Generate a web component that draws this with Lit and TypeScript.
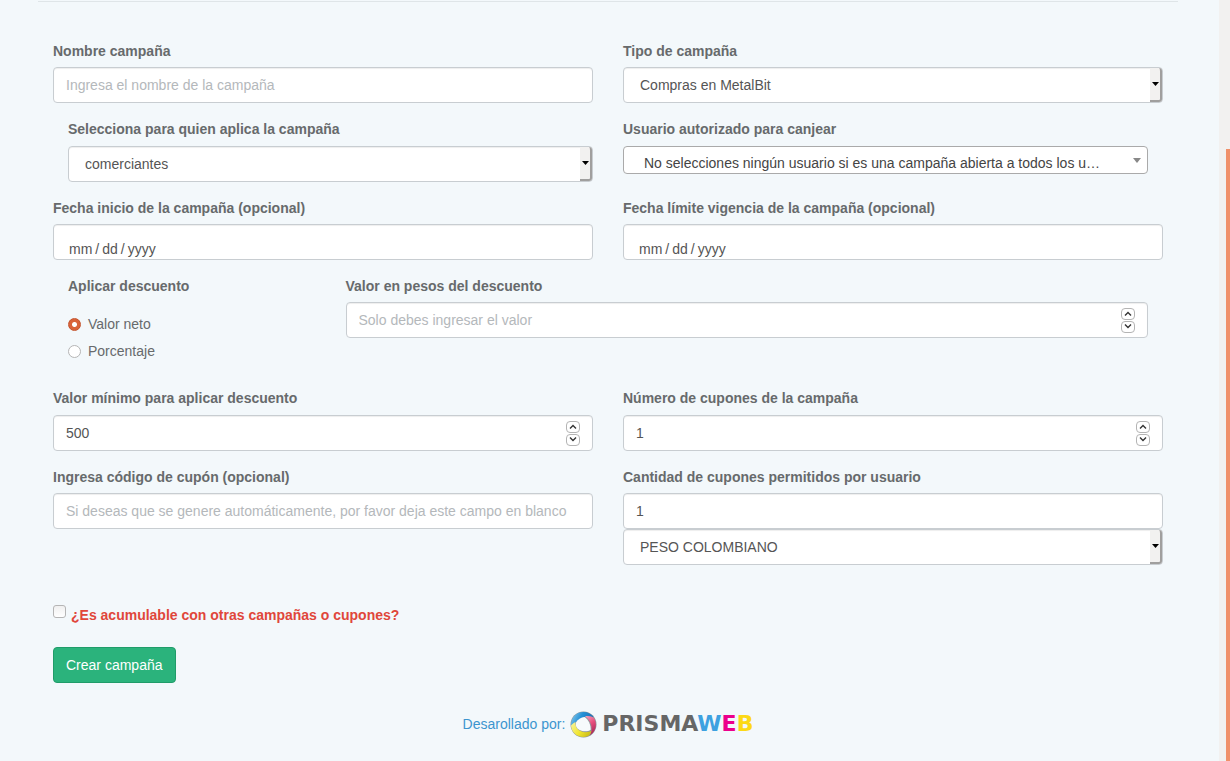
import { LitElement, html, css, svg } from "lit";
import { customElement, property } from "lit/decorators.js";

const baseStyles = css`
  *,
  *::before,
  *::after {
    box-sizing: border-box;
  }
  label,
  legend {
    display: block;
    padding: 0;
    font-weight: 700;
    line-height: 20px;
    color: #676a6c;
  }
  input,
  select,
  button {
    font: inherit;
    margin: 0;
  }
  .field {
    display: flex;
    flex-direction: column;
    gap: var(--label-gap, 6px);
    min-width: 0;
  }
  .control {
    width: 100%;
    height: 36px;
    padding: 0 12px;
    border: 1px solid #c8cdd1;
    border-radius: 4px;
    background: #fff;
    box-shadow: inset 0 1px 1px rgba(0, 0, 0, 0.07);
    color: #555;
    outline: none;
  }
  .control::placeholder,
  .bare::placeholder {
    color: #b4b8bb;
    opacity: 1;
  }
`;

@customElement("select-field")
class SelectField extends LitElement {
  @property() label = "";
  @property() value = "";
  @property() look = "native";

  static styles = [
    baseStyles,
    css`
      :host {
        display: block;
        min-width: 0;
      }
      .stack {
        display: grid;
        align-items: center;
      }
      .stack > * {
        grid-area: 1 / 1;
        min-width: 0;
      }
      select {
        appearance: none;
        text-overflow: ellipsis;
      }
      .native {
        padding: 0 28px 0 16px;
      }
      .search {
        height: 28px;
        padding: 6px 44px 0 20px;
        border-color: #aaa;
        box-shadow: none;
        color: #444;
      }
      .arrow {
        justify-self: end;
        align-self: stretch;
        display: grid;
        place-items: center;
        width: 12px;
        margin: 1px 1px 1px 0;
        border-right: 2px solid #a09f9e;
        border-bottom: 2px solid #a09f9e;
        border-radius: 0 3px 3px 0;
        background: #f2f1f0;
        pointer-events: none;
      }
      .caret {
        justify-self: end;
        margin-right: 7px;
        pointer-events: none;
      }
    `,
  ];

  render() {
    const native = this.look === "native";
    return html`
      <div class="field">
        ${this.label ? html`<label for="s">${this.label}</label>` : ""}
        <div class="stack">
          <select
            id="s"
            class="control ${this.look}"
            aria-label=${this.label || "Moneda"}
          >
            <option>${this.value}</option>
          </select>
          ${native
            ? html`<span class="arrow"
                ><svg width="7" height="4" viewBox="0 0 7 4">
                  <path d="M0 0H7L3.5 4Z" fill="#000" /></svg
              ></span>`
            : html`<svg
                class="caret"
                width="8"
                height="5"
                viewBox="0 0 8 5"
              >
                <path d="M0 0H8L4 5Z" fill="#888" />
              </svg>`}
        </div>
      </div>
    `;
  }
}

@customElement("number-field")
class NumberField extends LitElement {
  @property() label = "";
  @property() value = "";
  @property() placeholder = "";

  static styles = [
    baseStyles,
    css`
      :host {
        display: block;
        min-width: 0;
      }
      .box {
        display: flex;
        align-items: center;
      }
      .bare {
        flex: 1;
        min-width: 0;
        height: 100%;
        padding: 0;
        border: 0;
        outline: none;
        background: none;
        color: #555;
        appearance: textfield;
      }
      .bare::-webkit-inner-spin-button {
        appearance: none;
        margin: 0;
      }
      .steps {
        display: flex;
        flex-direction: column;
        gap: 1px;
      }
      .step {
        display: grid;
        place-items: center;
        width: 14px;
        height: 12px;
        padding: 0;
        border: 1px solid #b4b4b4;
        border-radius: 4px;
        background: #fff;
      }
    `,
  ];

  private step(dir: number) {
    const input = this.renderRoot.querySelector("input") as HTMLInputElement;
    dir > 0 ? input.stepUp() : input.stepDown();
  }

  render() {
    return html`
      <div class="field">
        <label for="n">${this.label}</label>
        <div class="control box">
          <input
            id="n"
            class="bare"
            type="number"
            .value=${this.value}
            placeholder=${this.placeholder}
          />
          <span class="steps">
            <button
              class="step"
              type="button"
              aria-label="Aumentar"
              @click=${() => this.step(1)}
            >
              <svg width="8" height="5" viewBox="0 0 8 5">
                <path d="M1 4.5L4 1.5L7 4.5" fill="none" stroke="#333" stroke-width="1.4" />
              </svg>
            </button>
            <button
              class="step"
              type="button"
              aria-label="Disminuir"
              @click=${() => this.step(-1)}
            >
              <svg width="8" height="5" viewBox="0 0 8 5">
                <path d="M1 0.5L4 3.5L7 0.5" fill="none" stroke="#333" stroke-width="1.4" />
              </svg>
            </button>
          </span>
        </div>
      </div>
    `;
  }
}

const swirl = svg`
  <defs>
    <linearGradient id="blue" x1="0" y1="0" x2="1" y2="0.3">
      <stop offset="0" stop-color="#8fd0ee" />
      <stop offset="0.5" stop-color="#2590d6" />
      <stop offset="1" stop-color="#1c70b4" />
    </linearGradient>
    <linearGradient id="pink" x1="0" y1="0" x2="0.4" y2="1">
      <stop offset="0" stop-color="#f7a3bd" />
      <stop offset="0.5" stop-color="#e8507f" />
      <stop offset="1" stop-color="#b02a5c" />
    </linearGradient>
    <linearGradient id="yellow" x1="0" y1="0" x2="1" y2="0.5">
      <stop offset="0" stop-color="#f6f3a0" />
      <stop offset="0.6" stop-color="#f1e630" />
      <stop offset="1" stop-color="#d2c41c" />
    </linearGradient>
  </defs>
  <circle cx="13.5" cy="13.5" r="13" fill="#8f9499" />
  <path d="M1.2 15C0.4 7 6 1 13.5 1C18 1 21.5 3 23.7 6.3C19 4.8 14 5.2 10 8C6.5 10.3 4 13 1.2 15Z" fill="url(#blue)" />
  <path d="M15 5.2C20 4.8 23.5 6 24.5 8C27.5 14 25.5 21 19.8 24.3C22 20.5 22.2 16 20.4 12C19.2 9 17.3 6.8 15 5.2Z" fill="url(#pink)" />
  <path d="M1 14.5C2.8 12.5 4.2 11.5 5.4 11.2C5 15 7 18.5 11 20.3C14.5 21.8 18.5 21.5 21.4 19.8C21 22.5 19.7 24 18.2 24.9C10.5 28 1.5 23.5 1 14.5Z" fill="url(#yellow)" />
  <path d="M5.8 11.8C7.5 8.4 11.2 6.2 14.5 6C18.3 8.2 20.9 13.8 20.7 18.8C16.5 21.7 8 20.7 5.8 14.8Z" fill="#f7fafc" />
`;

@customElement("app-root")
class AppRoot extends LitElement {
  static styles = [
    baseStyles,
    css`
      :host {
        display: flex;
        min-height: 100vh;
        background: #f3f8fb;
        color: #676a6c;
        font: 14px/20px "Liberation Sans", Arial, sans-serif;
      }
      main {
        flex: 1;
        min-width: 0;
        padding: 1px 41px 0 38px;
      }
      .rail {
        display: flex;
        width: 11px;
        padding: 149px 0 0 7px;
        background: #f2f1f0;
      }
      .thumb {
        flex: 1;
        background: #f0906a;
      }
      hr {
        margin: 0 0 39px;
        border: 0;
        border-top: 1px solid #dfe5e8;
      }
      form {
        display: flex;
        flex-direction: column;
        gap: 16px;
        padding: 0 15px;
      }
      .row {
        display: grid;
        grid-template-columns: 1fr 1fr;
        column-gap: 30px;
        align-items: start;
      }
      .roomy {
        --label-gap: 7px;
      }
      .inset-left {
        padding-left: 15px;
      }
      .inset-right {
        padding-right: 15px;
      }
      .discount {
        grid-template-columns: 1fr 3fr;
        column-gap: 0;
        margin-bottom: 4px;
      }
      .discount > * {
        padding: 0 15px;
      }
      .date {
        padding: 14px 15px 0;
        overflow: hidden;
      }
      .date::-webkit-calendar-picker-indicator {
        display: none;
      }
      .date::-webkit-datetime-edit,
      .date::-webkit-datetime-edit-fields-wrapper {
        padding: 0;
      }
      .date::-webkit-datetime-edit-month-field,
      .date::-webkit-datetime-edit-day-field,
      .date::-webkit-datetime-edit-year-field {
        padding: 0;
      }
      .date::-webkit-datetime-edit-text {
        padding: 0 3px;
      }
      fieldset {
        min-width: 0;
        margin: 0;
        border: 0;
      }
      legend {
        margin-bottom: 18px;
      }
      .option {
        display: flex;
        align-items: center;
        gap: 7px;
        margin-bottom: 7px;
        font-weight: 400;
      }
      .radio,
      .check {
        appearance: none;
        flex: none;
        width: 13px;
        height: 13px;
        border: 1px solid #b5b5b5;
        background: #fff;
      }
      .radio {
        border-radius: 50%;
      }
      .radio:checked {
        border-color: #c4532c;
        background: radial-gradient(circle, #fff 0 2px, #d9633a 3px);
      }
      .check {
        border-radius: 3px;
        background: linear-gradient(#f0f0f0, #fff);
      }
      .stackable {
        display: flex;
        gap: 5px;
        margin-top: 24px;
      }
      .stackable label {
        color: #e0463a;
      }
      .submit {
        align-self: flex-start;
        height: 36px;
        margin-top: 6px;
        padding: 0 12px;
        border: 1px solid #209c69;
        border-radius: 4px;
        background: #2bb37c;
        color: #fff;
      }
      footer {
        display: flex;
        justify-content: center;
        margin-top: 27px;
      }
      footer a {
        display: flex;
        align-items: center;
        gap: 5px;
        color: #3c95cf;
        text-decoration: none;
      }
      .brand {
        font: 700 22px/28px "DejaVu Sans", sans-serif;
        color: #666;
      }
      .cyan {
        color: #3da1e0;
      }
      .magenta {
        color: #ec008c;
      }
      .gold {
        color: #fcd916;
      }
    `,
  ];

  private textField(id: string, label: string, placeholder: string, value = "") {
    return html`<div class="field">
      <label for=${id}>${label}</label>
      <input id=${id} class="control" type="text" placeholder=${placeholder} .value=${value} />
    </div>`;
  }

  private dateField(id: string, label: string) {
    return html`<div class="field">
      <label for=${id}>${label}</label>
      <input id=${id} class="control date" type="date" />
    </div>`;
  }

  render() {
    return html`
      <main>
        <hr />
        <form @submit=${(e: Event) => e.preventDefault()}>
          <div class="row">
            ${this.textField("nombre", "Nombre campaña", "Ingresa el nombre de la campaña")}
            <select-field label="Tipo de campaña" value="Compras en MetalBit"></select-field>
          </div>
          <div class="row roomy">
            <select-field
              class="inset-left"
              label="Selecciona para quien aplica la campaña"
              value="comerciantes"
            ></select-field>
            <select-field
              class="inset-right"
              look="search"
              label="Usuario autorizado para canjear"
              value="No selecciones ningún usuario si es una campaña abierta a todos los usuarios"
            ></select-field>
          </div>
          <div class="row">
            ${this.dateField("inicio", "Fecha inicio de la campaña (opcional)")}
            ${this.dateField("limite", "Fecha límite vigencia de la campaña (opcional)")}
          </div>
          <div class="row discount">
            <fieldset>
              <legend>Aplicar descuento</legend>
              <label class="option">
                <input class="radio" type="radio" name="tipo" checked />Valor neto
              </label>
              <label class="option">
                <input class="radio" type="radio" name="tipo" />Porcentaje
              </label>
            </fieldset>
            <number-field
              label="Valor en pesos del descuento"
              placeholder="Solo debes ingresar el valor"
            ></number-field>
          </div>
          <div class="row roomy">
            <number-field label="Valor mínimo para aplicar descuento" value="500"></number-field>
            <number-field label="Número de cupones de la campaña" value="1"></number-field>
          </div>
          <div class="row">
            ${this.textField(
              "codigo",
              "Ingresa código de cupón (opcional)",
              "Si deseas que se genere automáticamente, por favor deja este campo en blanco"
            )}
            <div>
              ${this.textField("cantidad", "Cantidad de cupones permitidos por usuario", "", "1")}
              <select-field value="PESO COLOMBIANO"></select-field>
            </div>
          </div>
          <div class="stackable">
            <input id="acumulable" class="check" type="checkbox" />
            <label for="acumulable">¿Es acumulable con otras campañas o cupones?</label>
          </div>
          <button class="submit" type="submit">Crear campaña</button>
        </form>
        <footer>
          <a href="#">
            <span>Desarollado por:</span>
            <svg width="27" height="27" viewBox="0 0 27 27" aria-hidden="true">${swirl}</svg>
            <span class="brand"
              >PRISMA<span class="cyan">W</span><span class="magenta">E</span
              ><span class="gold">B</span></span
            >
          </a>
        </footer>
      </main>
      <div class="rail"><div class="thumb"></div></div>
    `;
  }
}
